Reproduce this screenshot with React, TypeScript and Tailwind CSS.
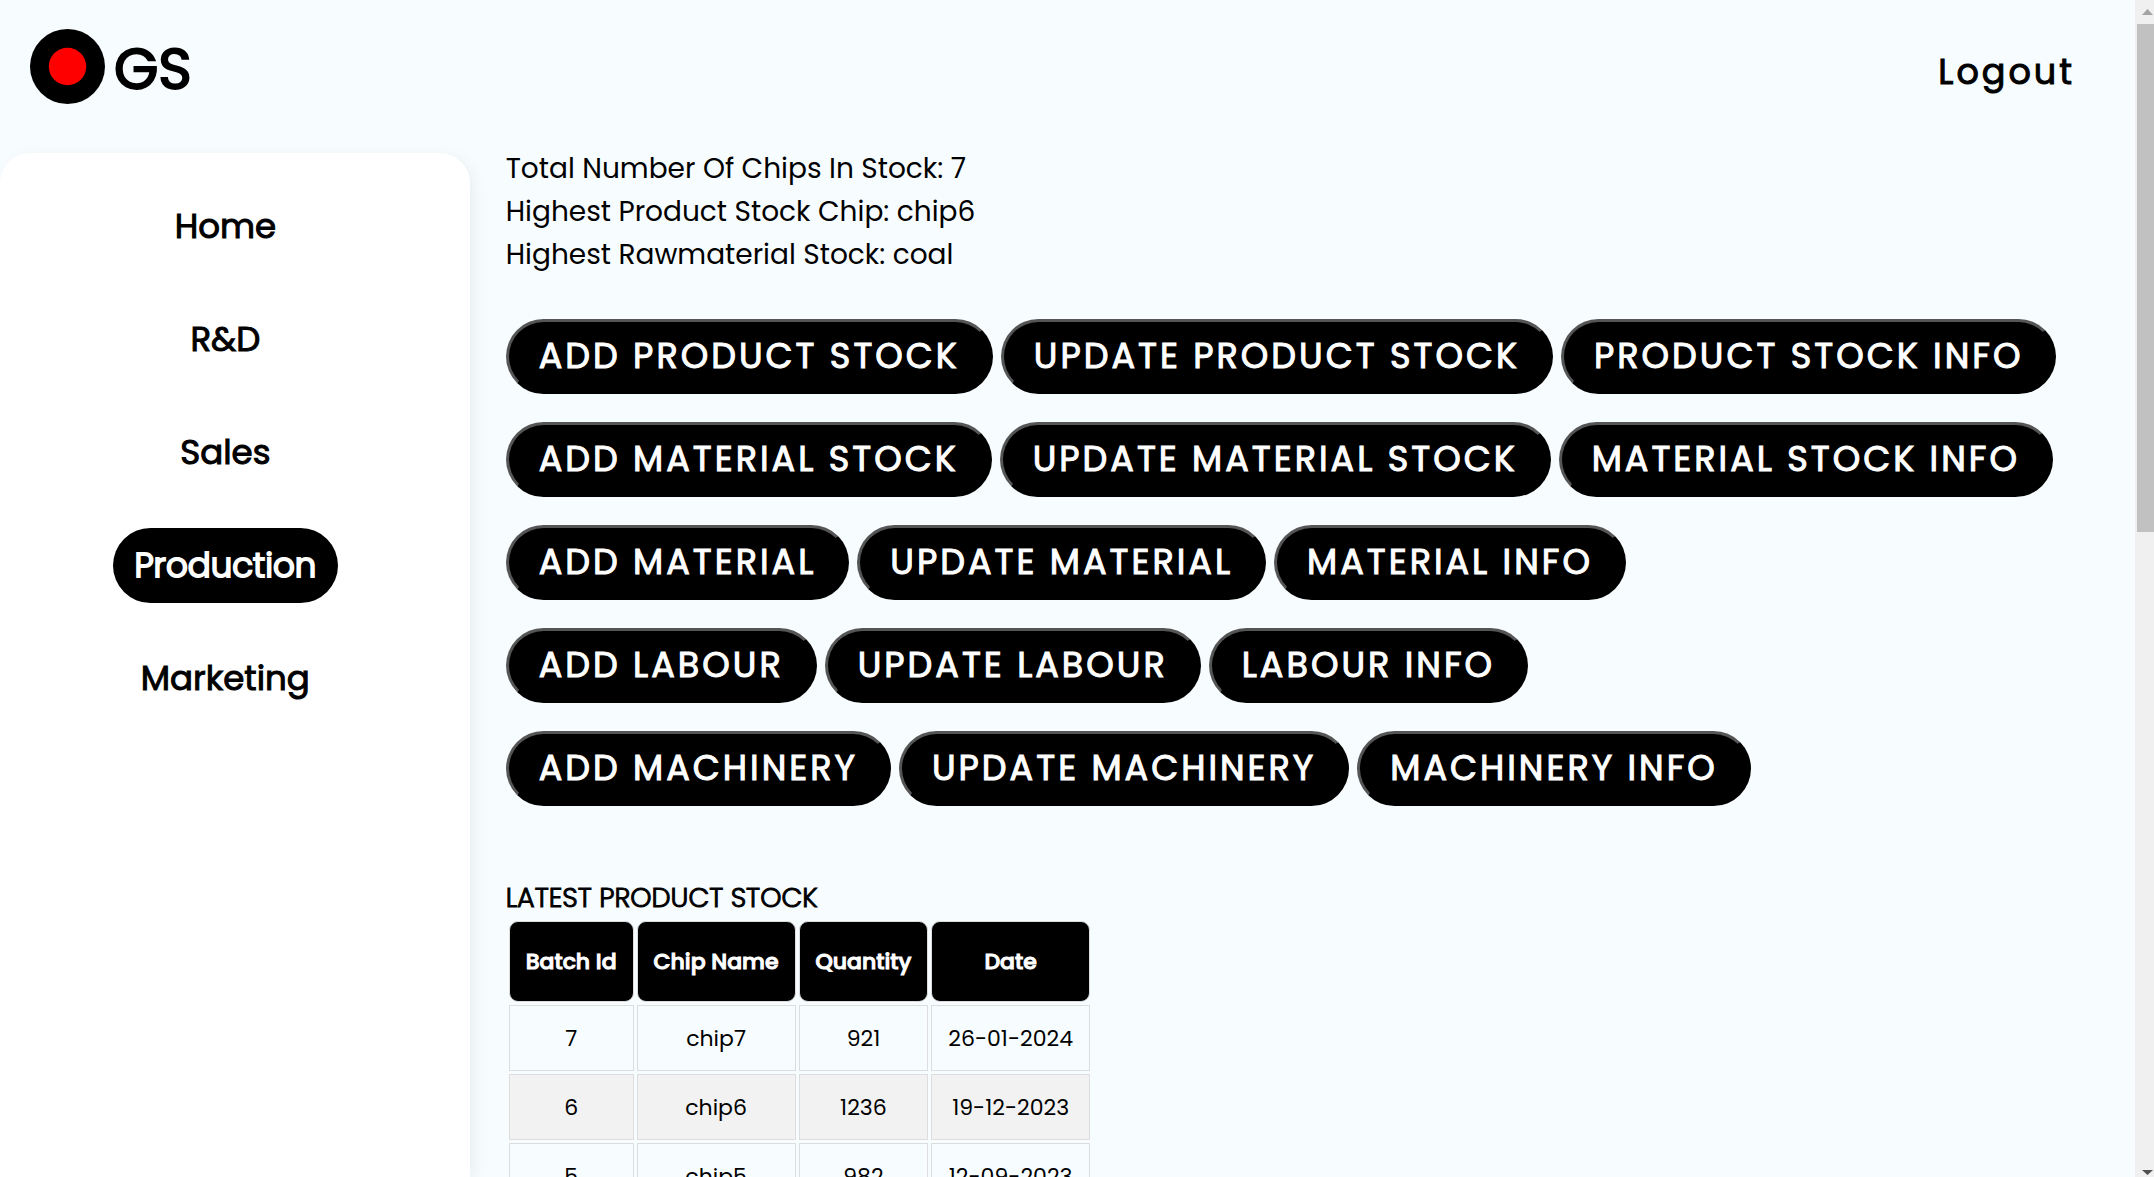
const actionRows = [
  ["ADD PRODUCT STOCK", "UPDATE PRODUCT STOCK", "PRODUCT STOCK INFO"],
  ["ADD MATERIAL STOCK", "UPDATE MATERIAL STOCK", "MATERIAL STOCK INFO"],
  ["ADD MATERIAL", "UPDATE MATERIAL", "MATERIAL INFO"],
  ["ADD LABOUR", "UPDATE LABOUR", "LABOUR INFO"],
  ["ADD MACHINERY", "UPDATE MACHINERY", "MACHINERY INFO"],
];

const navItems = ["Home", "R&D", "Sales", "Production", "Marketing"];

const columns = ["Batch Id", "Chip Name", "Quantity", "Date"];

const stock = [
  ["7", "chip7", "921", "26-01-2024"],
  ["6", "chip6", "1236", "19-12-2023"],
  ["5", "chip5", "982", "12-09-2023"],
];

function Header() {
  return (
    <header className="flex h-[153px] shrink-0 items-start justify-between pt-[29px] pr-[60px] pl-[30px]">
      <a href="#" className="flex h-[75px] items-center gap-[9px]">
        <svg viewBox="0 0 75 75" className="size-[75px]" aria-hidden="true">
          <circle cx="37.5" cy="37.5" r="37.5" fill="#000" />
          <circle cx="37.5" cy="37.5" r="18.7" fill="#f00" />
        </svg>
        <span className="pt-1.5 text-[57px] leading-none [-webkit-text-stroke:2px]">GS</span>
      </a>
      <a href="#" className="pt-[21px] text-[35px] leading-[44px] tracking-[3px] [-webkit-text-stroke:1px]">
        Logout
      </a>
    </header>
  );
}

function Sidebar() {
  return (
    <nav className="w-[22%] shrink-0 rounded-t-[30px] bg-white pt-[36px] pr-[19px] shadow-[4px_4px_16px_rgba(0,0,0,0.06)]">
      <ul className="flex flex-col items-center gap-[38px]">
        {navItems.map((item) => (
          <li key={item}>
            <a
              href="#"
              className={
                item === "Production"
                  ? "flex h-[75px] w-[225px] items-center justify-center rounded-full bg-black text-[34px] font-light text-white [-webkit-text-stroke:2px]"
                  : "flex h-[75px] w-[225px] items-center justify-center text-[34px] [-webkit-text-stroke:1px]"
              }
            >
              {item}
            </a>
          </li>
        ))}
      </ul>
    </nav>
  );
}

function StockTable() {
  return (
    <section className="mt-[71px]">
      <h2 className="text-[27px] leading-[41px] font-light [-webkit-text-stroke:1px]">LATEST PRODUCT STOCK</h2>
      <table className="border-separate border-spacing-[3px] text-center text-[22px]">
        <thead>
          <tr>
            {columns.map((column) => (
              <th
                key={column}
                className="h-[81px] rounded-[9px] border border-[#ddd] bg-black px-[16px] font-medium text-white [-webkit-text-stroke:1px]"
              >
                {column}
              </th>
            ))}
          </tr>
        </thead>
        <tbody>
          {stock.map((row) => (
            <tr key={row[0]} className="even:bg-[#f2f2f2]">
              {row.map((cell) => (
                <td key={cell} className="h-[66px] border border-[#ddd] px-[16px]">
                  {cell}
                </td>
              ))}
            </tr>
          ))}
        </tbody>
      </table>
    </section>
  );
}

function Scrollbar() {
  return (
    <div className="flex w-[19px] shrink-0 flex-col items-end bg-[#f0f0f0]" aria-hidden="true">
      <svg viewBox="0 0 17 24" className="h-[24px] w-[17px] shrink-0">
        <path d="M5 15 L10.5 9 L16 15 Z" fill="#a3a3a3" />
      </svg>
      <div className="h-[508px] w-[17px] bg-[#c1c1c1]" />
      <svg viewBox="0 0 17 24" className="mt-auto h-[24px] w-[17px] shrink-0">
        <path d="M5 17 H16 L10.5 22 Z" fill="#505050" />
      </svg>
    </div>
  );
}

export default function App() {
  return (
    <div className="flex h-screen overflow-hidden bg-[#f7fdff] font-['Poppins','Inter',sans-serif] text-black">
      <div className="flex min-w-0 flex-1 flex-col">
        <Header />
        <div className="flex min-h-0 flex-1">
          <Sidebar />
          <main className="-mt-[6px] min-w-0 flex-1 pl-[36px]">
            <div className="text-[28px] leading-[43px]">
              <p>Total Number Of Chips In Stock: 7</p>
              <p>Highest Product Stock Chip: chip6</p>
              <p>Highest Rawmaterial Stock: coal</p>
            </div>
            <div className="mt-[43px] flex flex-col gap-[28px]">
              {actionRows.map((row) => (
                <div key={row[0]} className="flex gap-2">
                  {row.map((action) => (
                    <button
                      key={action}
                      type="button"
                      className="h-[75px] rounded-full border-[3px] border-t-[#555] border-r-black border-b-black border-l-[#555] bg-black px-[30px] text-[35px] tracking-[3px] whitespace-nowrap text-white [-webkit-text-stroke:1px]"
                    >
                      {action}
                    </button>
                  ))}
                </div>
              ))}
            </div>
            <StockTable />
          </main>
        </div>
      </div>
      <Scrollbar />
    </div>
  );
}
